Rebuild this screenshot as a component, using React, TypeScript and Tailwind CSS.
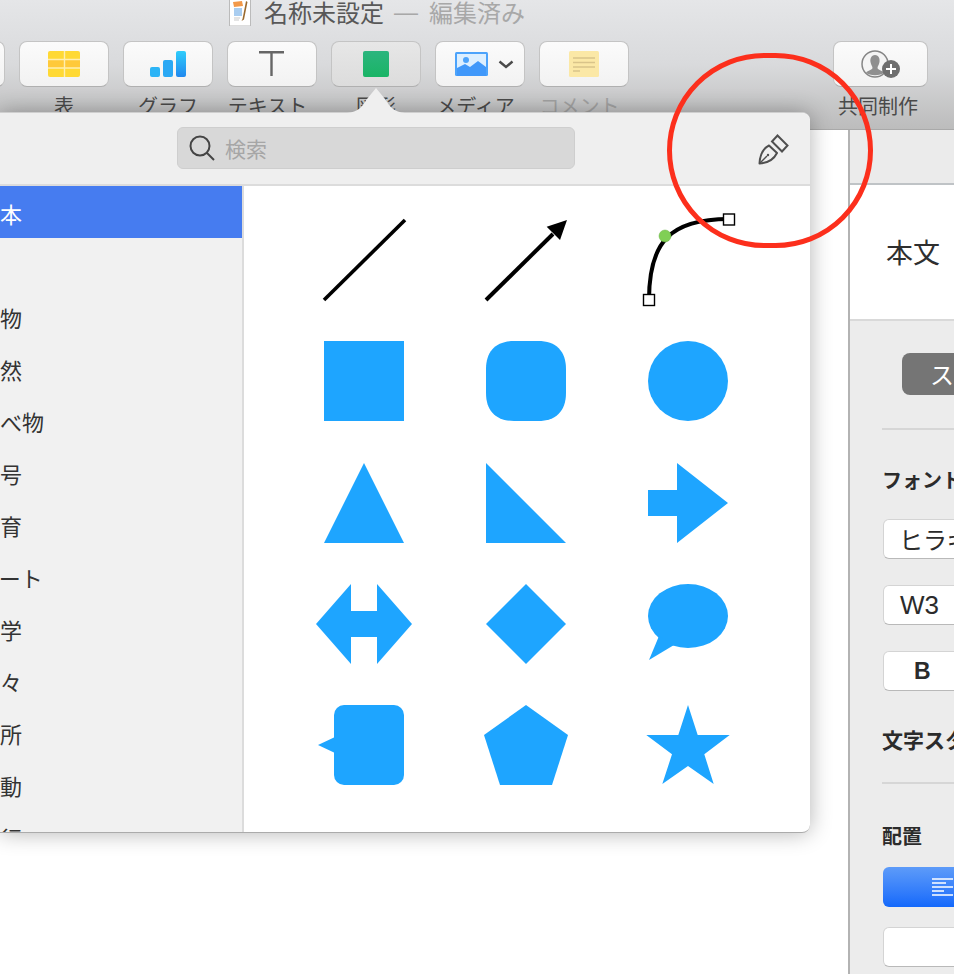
import React from 'react';

const BLUE = '#1ea5ff';

function Shape({children}: {children: React.ReactNode}) {
  return (
    <svg viewBox="0 0 100 100" className="w-[100px] h-[100px] overflow-visible" fill={BLUE}>
      {children}
    </svg>
  );
}

function ToolButton({label, muted, active, shift, children}: {label: string; muted?: boolean; active?: boolean; shift?: boolean; children?: React.ReactNode}) {
  return (
    <div className="flex flex-col items-center w-[90px] shrink-0">
      <div className={`w-full h-[46px] rounded-lg border border-[#c4c4c4] border-b-[#b0b0b0] flex items-center justify-center ${active ? 'bg-linear-to-b from-[#e7e7e7] to-[#dcdcdc]' : 'bg-linear-to-b from-[#fbfbfb] to-[#f2f2f2]'}`}>
        {children}
      </div>
      <span className={`mt-[4px] text-[20px] leading-[30px] whitespace-nowrap ${shift ? '-ml-[9px]' : ''} ${muted ? 'text-[#a3a3a3]' : 'text-[#4a4a4a]'}`}>{label}</span>
    </div>
  );
}

function Toolbar() {
  return (
    <div className="h-[130px] shrink-0 border-b border-[#a9a9a9] bg-linear-to-b from-[#e5e6e8] via-[#d9dadc] to-[#bcbcbc] overflow-hidden">
      <div className="h-[41px] flex items-start pl-[229px]">
        <svg width="22" height="26" viewBox="0 0 22 26" className="shrink-0">
          <rect x="0.5" y="-1" width="21" height="27" fill="#fff" stroke="#bbb"/>
          <path d="M4 2 L13 1 L14 6 L5 7 Z" fill="#f2994a"/>
          <rect x="5" y="8" width="8" height="8" fill="#a9cdf0"/>
          <path d="M5 18 H11 M5 20 H10" stroke="#c9c9c9" strokeWidth="1"/>
          <path d="M17 1 L13.5 19 L12.5 21 L15 19.5 L18.5 2 Z" fill="#9a6a2f"/>
        </svg>
        <span className="ml-[13px] text-[24px] leading-6 text-[#585858] whitespace-nowrap">名称未設定</span>
        <span className="ml-[10px] text-[24px] leading-6 text-[#a8a8a8] font-['Liberation_Sans',sans-serif]">—</span>
        <span className="ml-[11px] text-[24px] leading-6 text-[#a8a8a8] whitespace-nowrap">編集済み</span>
      </div>
      <div className="flex gap-[14px] -ml-[85px]">
        <ToolButton label=""/>
        <ToolButton label="表">
          <svg width="32" height="26" viewBox="0 0 32 26">
            <rect width="32" height="26" rx="2" fill="#ffd934"/>
            <rect y="8" width="32" height="9" fill="#ffc93a"/>
            <path d="M0 8.5 H32 M0 17 H32 M16.5 0 V26" stroke="#ffeeb0" strokeWidth="1.4"/>
          </svg>
        </ToolButton>
        <ToolButton label="グラフ">
          <svg width="36" height="26" viewBox="0 0 36 26">
            <defs>
              <linearGradient id="bar" x1="0" y1="0" x2="0" y2="1">
                <stop offset="0" stopColor="#2fcdfb"/>
                <stop offset="1" stopColor="#2088ee"/>
              </linearGradient>
            </defs>
            <rect x="0" y="16" width="10" height="10" rx="2" fill="#2cb4f6"/>
            <rect x="13" y="9" width="10" height="17" rx="2" fill="#2aa8f4"/>
            <rect x="26" y="0" width="10" height="26" rx="2" fill="url(#bar)"/>
          </svg>
        </ToolButton>
        <ToolButton label="テキスト" shift>
          <svg width="26" height="26" viewBox="0 0 26 26">
            <path d="M0 1.2 H25 M12.5 1.2 V25" stroke="#666" strokeWidth="2.4" fill="none"/>
          </svg>
        </ToolButton>
        <ToolButton label="図形" active>
          <div className="w-[26px] h-[26px] rounded-[2px] bg-linear-to-b from-[#2bb57e] to-[#19b465]"/>
        </ToolButton>
        <ToolButton label="メディア" shift>
          <div className="flex items-center gap-[10px] ml-[8px]">
            <svg width="33" height="24" viewBox="0 0 33 24">
              <rect width="33" height="24" rx="1.5" fill="#4ca3fb"/>
              <rect x="2" y="2" width="29" height="15" fill="#dcefff"/>
              <circle cx="11" cy="8" r="3" fill="#4ca3fb"/>
              <path d="M2 16 L10 12 L15 15 L23 9 L31 15 V24 H2 Z" fill="#4098fa"/>
            </svg>
            <svg width="16" height="9" viewBox="0 0 16 9">
              <path d="M1.5 1.5 L8 7 L14.5 1.5" stroke="#4a4a4a" strokeWidth="2.4" fill="none"/>
            </svg>
          </div>
        </ToolButton>
        <ToolButton label="コメント" muted shift>
          <svg width="30" height="26" viewBox="0 0 30 26">
            <rect width="30" height="26" rx="1.5" fill="#fbe8a6"/>
            <path d="M4 7 H26 M4 11.5 H26 M4 16 H26 M4 20 H11" stroke="#d9c48a" strokeWidth="1.6"/>
          </svg>
        </ToolButton>
        <div className="ml-auto mr-[26px] flex flex-col items-center w-[95px] shrink-0">
          <div className="w-full h-[46px] rounded-lg border border-[#c4c4c4] border-b-[#b0b0b0] bg-linear-to-b from-[#fbfbfb] to-[#f2f2f2] flex items-center justify-center">
            <svg width="40" height="28" viewBox="0 0 40 28">
              <circle cx="14" cy="14" r="13" fill="#f4f4f4" stroke="#858585" strokeWidth="1.5"/>
              <path d="M14 5 C18 5 19 9 18.5 12 C18 15 16.5 16 16.5 18 C17 20 21 20.5 23 22.5 C20 26 8 26 5 22.5 C7 20.5 11 20 11.5 18 C11.5 16 10 15 9.5 12 C9 9 10 5 14 5 Z" fill="#8f8f8f"/>
              <circle cx="30" cy="19" r="9" fill="#6e6e6e"/>
              <path d="M30 14 V24 M25 19 H35" stroke="#fff" strokeWidth="2"/>
            </svg>
          </div>
          <span className="mt-[4px] -ml-[5px] text-[20px] leading-[30px] whitespace-nowrap text-[#4a4a4a]">共同制作</span>
        </div>
      </div>
    </div>
  );
}

function Inspector() {
  return (
    <div className="w-[106px] shrink-0 border-l-2 border-[#b3b3b3] flex flex-col overflow-hidden">
      <div className="h-[55px] shrink-0 bg-[#ebebeb] border-b-2 border-[#bfc3c6]"/>
      <div className="h-[136px] shrink-0 bg-white border-b-2 border-[#d9d9d9] flex items-center pl-[36px] pb-[2px]">
        <span className="text-[27px] leading-none text-[#2f2f2f] whitespace-nowrap">本文</span>
      </div>
      <div className="flex-1 bg-[#ececec] pl-[32px] flex flex-col items-start w-[150px]">
        <div className="mt-[32px] ml-[20px] w-[130px] h-[42px] rounded-lg bg-[#757575] text-white text-[24px] leading-[42px] pl-[28px] whitespace-nowrap overflow-hidden">スタイル</div>
        <div className="mt-[33px] w-full h-[2px] bg-[#d6d6d6]"/>
        <span className="mt-[36px] font-bold text-[20px] leading-[28px] text-[#2b2b2b] whitespace-nowrap">フォント</span>
        <div className="mt-[25px] ml-[1px] w-full h-[40px] rounded-md bg-white border border-[#d4d4d4] border-b-[#b9b9b9] text-[24px] leading-[38px] pl-[15px] text-[#2b2b2b] whitespace-nowrap overflow-hidden">ヒラギノ</div>
        <div className="mt-[26px] ml-[1px] w-full h-[40px] rounded-md bg-white border border-[#d4d4d4] border-b-[#b9b9b9] text-[26px] leading-[38px] pl-[16px] text-[#2b2b2b] font-['Liberation_Sans',sans-serif]">W3</div>
        <div className="mt-[26px] ml-[1px] w-full h-[40px] rounded-md bg-white border border-[#d4d4d4] border-b-[#b9b9b9] text-[23px] leading-[38px] pl-[30px] text-[#2b2b2b] font-bold font-['Liberation_Sans',sans-serif]">B</div>
        <span className="mt-[34px] font-bold text-[21px] leading-[28px] text-[#2b2b2b] whitespace-nowrap">文字スタイル</span>
        <div className="mt-[29px] w-full h-[2px] bg-[#d6d6d6]"/>
        <span className="mt-[38px] font-bold text-[20px] leading-[28px] text-[#2b2b2b] whitespace-nowrap">配置</span>
        <div className="mt-[17px] ml-[1px] w-full h-[40px] rounded-md bg-linear-to-b from-[#5d9bf9] to-[#1268fb] flex items-start pl-[49px] pt-[11px]">
          <svg width="21" height="18" viewBox="0 0 21 18">
            <path d="M0 1 H21 M0 5 H14 M0 9 H21 M0 13 H12 M0 17 H21" stroke="#fff" strokeWidth="1.3"/>
          </svg>
        </div>
        <div className="mt-[20px] ml-[1px] w-full h-[40px] rounded-md bg-white border border-[#d4d4d4] border-b-[#b9b9b9]"/>
      </div>
    </div>
  );
}

const categories = ['基本', '\u00a0', '動物', '自然', '食べ物', '記号', '教育', 'アート', '科学', '人々', '場所', '活動', '旅行'];

function ShapesPopover() {
  return (
    <div className="absolute left-0 top-[112px] w-[810px] h-[721px]">
      <svg className="absolute left-[345px] -top-[24px]" width="62" height="25" viewBox="345 88 62 25">
        <path d="M347 113 C358 112 362 107 367 99 L376 88 L385 99 C390 107 394 112 405 113 Z" fill="#efefef"/>
      </svg>
      <div className="w-full h-full rounded-r-lg overflow-hidden bg-white flex flex-col border-t border-[#cfcfcf] border-b border-b-[#ababab] shadow-[0_0_22px_rgba(0,0,0,0.3)]">
        <div className="h-[73px] shrink-0 bg-[#efefef] border-b-2 border-[#dcdcdc] flex items-center relative">
          <div className="ml-[177px] -mt-[1px] w-[398px] h-[42px] rounded-md bg-[#d8d8d8] border border-[#cecece] flex items-center pl-[11px]">
            <svg width="26" height="26" viewBox="0 0 26 26" className="shrink-0">
              <circle cx="11" cy="11" r="9.5" fill="none" stroke="#444" strokeWidth="2"/>
              <path d="M17.5 17.5 L25 25" stroke="#444" strokeWidth="2"/>
            </svg>
            <span className="ml-[10px] text-[21px] leading-none text-[#a6a6a6]">検索</span>
          </div>
          <svg className="ml-auto mr-[21px] mt-[2px]" width="32" height="34" viewBox="757 131 32 34" fill="none" stroke="#4f4f4f" strokeWidth="2">
            <path d="M759.5 161.5 C760 152.5 763 146.5 769 143.5 L777 151 C774 157 768 161 759.5 161.5 Z" strokeLinejoin="round"/>
            <path d="M759.5 161.5 L767 154" strokeWidth="1.4"/>
            <circle cx="768" cy="153" r="1.2" fill="#4f4f4f" stroke="none"/>
            <path d="M777.5 133.5 L787.5 143.5 L782 149.5 L772 139.5 Z"/>
          </svg>
        </div>
        <div className="flex-1 flex min-h-0">
          <div className="w-[244px] shrink-0 bg-[#f1f1f1] border-r-2 border-[#dcdcdc] overflow-hidden">
            {categories.map((name, i) => (
              <div key={name} className={`h-[52px] flex items-center pt-[2px] text-[22px] whitespace-nowrap ${i === 0 ? 'bg-[#467cf0] text-white' : 'text-[#333]'}`}>
                <span className="-ml-[22px]">{name}</span>
              </div>
            ))}
          </div>
          <div className="flex-1 pl-[39px] pt-[24px] grid grid-cols-[repeat(3,162px)] auto-rows-[121.3px] justify-items-center content-start">
            <Shape>
              <path d="M10 90 L91 10" stroke="#000" strokeWidth="3.6" fill="none"/>
            </Shape>
            <Shape>
              <path d="M10 90 L77 24" stroke="#000" strokeWidth="4" fill="none"/>
              <path d="M70.7 16.7 L91 10 L84 30 Z" fill="#000"/>
            </Shape>
            <Shape>
              <path d="M11 90 C11 32 32 9 91 9" stroke="#000" strokeWidth="4" fill="none"/>
              <circle cx="27" cy="26" r="6" fill="#80cf55" stroke="#6ab245" strokeWidth="0.5"/>
              <rect x="5.5" y="84.5" width="11" height="11" fill="#fff" stroke="#000" strokeWidth="1.4"/>
              <rect x="85.5" y="4" width="11" height="11" fill="#fff" stroke="#000" strokeWidth="1.4"/>
            </Shape>
            <Shape><rect x="10" y="10" width="80" height="80"/></Shape>
            <Shape><path d="M38 10 H62 C80 10 90 20 90 38 V62 C90 80 80 90 62 90 H38 C20 90 10 80 10 62 V38 C10 20 20 10 38 10 Z"/></Shape>
            <Shape><circle cx="50" cy="50" r="40"/></Shape>
            <Shape><path d="M50 10 L90 90 L10 90 Z"/></Shape>
            <Shape><path d="M10 10 L90 90 L10 90 Z"/></Shape>
            <Shape><path d="M39 10 L90 50 L39 90 V63 H10 V37 H39 Z"/></Shape>
            <Shape><path d="M2 50 L37 10 V37 H63 V10 L98 50 L63 90 V63 H37 V90 Z"/></Shape>
            <Shape><path d="M50 10 L90 50 L50 90 L10 50 Z"/></Shape>
            <Shape>
              <ellipse cx="50" cy="42" rx="40" ry="32"/>
              <path d="M21 62 L11 86 L36 71 Z"/>
            </Shape>
            <Shape>
              <rect x="20" y="10" width="70" height="80" rx="10"/>
              <path d="M21 42 L4 50 L21 58 Z"/>
            </Shape>
            <Shape><path d="M50 10 L92 40 L76 90 H24 L8 40 Z"/></Shape>
            <Shape><path d="M50 10 L59.7 40 H91.7 L66.3 59.3 L75.7 89 L50 71 L24.3 89 L34 59.3 L8.3 40 H40.3 Z"/></Shape>
          </div>
        </div>
      </div>
    </div>
  );
}

export default function App() {
  return (
    <div className="relative w-[954px] h-[974px] overflow-hidden bg-white flex flex-col font-['Noto_Sans_CJK_JP',sans-serif]">
      <Toolbar/>
      <div className="flex-1 flex min-h-0">
        <div className="flex-1 bg-white"/>
        <Inspector/>
      </div>
      <ShapesPopover/>
      <div className="absolute left-[667px] top-[53px] w-[206px] h-[195px] rounded-full border-[5px] border-[#fc2f1c]"/>
    </div>
  );
}
